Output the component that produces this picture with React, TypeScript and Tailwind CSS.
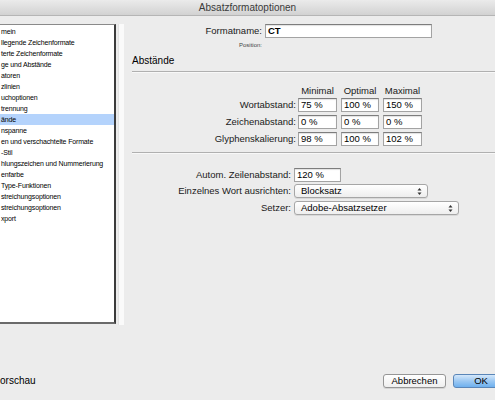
import * as React from "react"

const listItems = [
  "mein",
  "llegende Zeichenformate",
  "terte Zeichenformate",
  "ge und Abstände",
  "atoren",
  "zlinien",
  "uchoptionen",
  "trennung",
  "ände",
  "nspanne",
  "en und verschachtelte Formate",
  "-Stil",
  "hlungszeichen und Nummerierung",
  "enfarbe",
  "Type-Funktionen",
  "streichungsoptionen",
  "streichungsoptionen",
  "xport",
]

const rows = [
  { label: "Wortabstand:", values: ["75 %", "100 %", "150 %"] },
  { label: "Zeichenabstand:", values: ["0 %", "0 %", "0 %"] },
  { label: "Glyphenskalierung:", values: ["98 %", "100 %", "102 %"] },
]

function Field({ value, className = "" }: { value: string; className?: string }) {
  return (
    <div
      className={`shrink-0 h-[14px] bg-white border border-[#a3a3a3] border-t-[#7d7d7d] shadow-[inset_0_1px_1px_rgba(0,0,0,0.12)] pl-[2px] text-[9.5px] leading-[12px] text-black ${className}`}
    >
      {value}
    </div>
  )
}

function Select({ value, className = "" }: { value: string; className?: string }) {
  return (
    <div
      className={`shrink-0 h-[14px] flex items-center justify-between rounded-[3px] border border-[#a6a6a6] bg-gradient-to-b from-white to-[#eeeeee] shadow-[0_1px_0_rgba(0,0,0,0.08)] pl-[6px] pr-[5px] text-[9.5px] text-black ${className}`}
    >
      <span>{value}</span>
      <svg width="5" height="9" viewBox="0 0 5 9">
        <path d="M2.5 1 L4.5 3.5 L0.5 3.5 Z" fill="#333" />
        <path d="M2.5 8 L4.5 5.5 L0.5 5.5 Z" fill="#333" />
      </svg>
    </div>
  )
}

export default function App() {
  return (
    <div
      className="w-[495px] h-[400px] overflow-hidden bg-[#ececec] flex flex-col text-[#1a1a1a]"
      style={{ fontFamily: '"Liberation Sans", Arial, sans-serif' }}
    >
      {/* title bar */}
      <div className="h-[16px] shrink-0 flex items-center justify-center bg-gradient-to-b from-[#ebebeb] to-[#d2d2d2] border-b border-[#b5b5b5] text-[10px] text-[#3a3a3a]">
        Absatzformatoptionen
      </div>

      <div className="flex h-[309px] shrink-0">
        {/* category list */}
        <div className="w-[125px] shrink-0 flex pt-[8px]">
          <div className="w-[116px] h-[300px] bg-white border-t border-[#8a8a8a] border-r-2 border-r-[#3c3c3c] border-b-2 border-b-[#6a6a6a] pt-[1px]">
            {listItems.map((item, i) => (
              <div
                key={i}
                className={`h-[11px] leading-[11px] text-[7px] tracking-[-0.15px] whitespace-nowrap pl-px text-black ${
                  item === "ände" ? "bg-[#b4d3fc]" : ""
                }`}
              >
                {item}
              </div>
            ))}
          </div>
          <div className="ml-[2px] w-[6px] h-[301px] bg-[#fafafa] border-l border-[#e2e2e2]" />
        </div>

        {/* settings */}
        <div className="flex-1 pl-[7px] pt-[8px]">
          <div className="flex items-center">
            <div className="w-[130px] text-right text-[9.5px]">Formatname:</div>
            <Field value="CT" className="ml-[3px] w-[167px] font-bold" />
          </div>
          <div className="mt-[4px] h-[7px] w-[130px] text-right text-[6px] leading-[7px] text-[#444]">
            Position:
          </div>
          <div className="mt-[6px] h-[12px] text-[10px] leading-[12px] text-black">Abstände</div>
          <div className="mt-[4px] border-t border-[#b0b0b0] border-b border-b-[#f8f8f8]" />

          <div className="mt-[12px] flex text-[9.5px] leading-[12px]">
            <div className="w-[166px]" />
            <div className="w-[39px] text-center">Minimal</div>
            <div className="ml-[4px] w-[38px] text-center">Optimal</div>
            <div className="ml-[4px] w-[39px] text-center">Maximal</div>
          </div>

          <div className="mt-[1px] flex flex-col gap-[3px]">
            {rows.map(r => (
              <div key={r.label} className="h-[14px] flex items-center">
                <div className="w-[164px] text-right text-[9.5px] leading-[12px]">{r.label}</div>
                <Field value={r.values[0]} className="ml-[2px] w-[39px]" />
                <Field value={r.values[1]} className="ml-[4px] w-[38px]" />
                <Field value={r.values[2]} className="ml-[4px] w-[39px]" />
              </div>
            ))}
          </div>

          <div className="mt-[6px] border-t border-[#b0b0b0] border-b border-b-[#f8f8f8]" />

          <div className="mt-[14px] flex flex-col gap-[2px]">
            <div className="h-[14px] flex items-center">
              <div className="w-[159px] text-right text-[9.5px] leading-[12px]">Autom. Zeilenabstand:</div>
              <Field value="120 %" className="ml-[3px] w-[47px]" />
            </div>
            <div className="h-[14px] flex items-center">
              <div className="w-[159px] text-right text-[9.5px] leading-[12px]">Einzelnes Wort ausrichten:</div>
              <div className="ml-[3px] w-[134px] flex">
                <Select value="Blocksatz" className="w-full" />
              </div>
            </div>
            <div className="mt-[1px] h-[14px] flex items-center">
              <div className="w-[159px] text-right text-[9.5px] leading-[12px]">Setzer:</div>
              <div className="ml-[3px] w-[165px] flex">
                <Select value="Adobe-Absatzsetzer" className="w-full" />
              </div>
            </div>
          </div>
        </div>
      </div>

      {/* footer */}
      <div className="flex-1 flex items-end pb-[12px]">
        <div className="flex-1 flex items-center justify-between">
          <div className="text-[10px] leading-[14px] text-black">orschau</div>
          <div className="flex items-center gap-[7px] -mr-[20px]">
            <button className="h-[14px] w-[63px] rounded-[3px] border border-[#969696] bg-gradient-to-b from-white to-[#efefef] shadow-[0_1px_0_rgba(0,0,0,0.1)] text-[9.5px] leading-[12px] text-black">
              Abbrechen
            </button>
            <button className="h-[14px] w-[62px] rounded-[3px] border border-[#5a86b8] bg-gradient-to-b from-[#d5e8fb] via-[#9cc8f2] to-[#6eb0ee] text-[9.5px] leading-[12px] text-black pr-[6px]">
              OK
            </button>
          </div>
        </div>
      </div>
    </div>
  )
}
